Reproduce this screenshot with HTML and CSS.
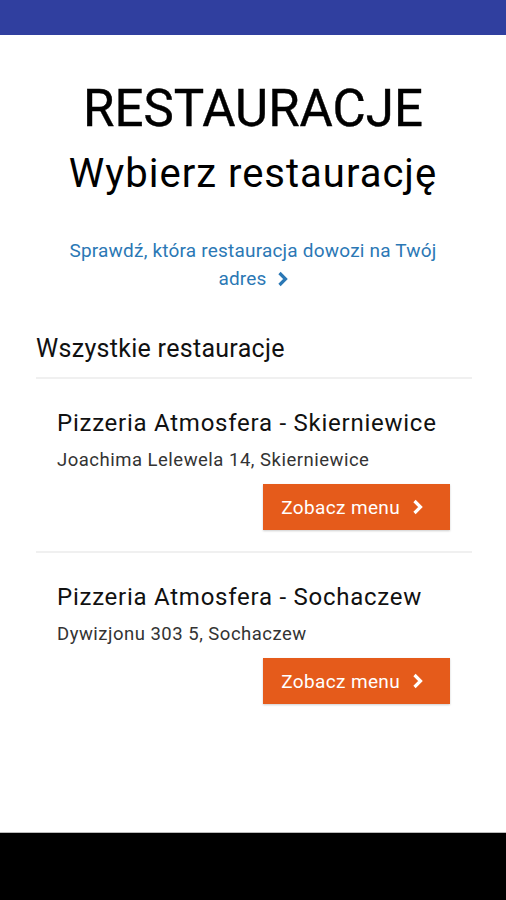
FILE: index.html
```html
<!DOCTYPE html>
<html lang="pl">
  <head>
    <meta charset="UTF-8" />
    <meta name="viewport" content="width=device-width, initial-scale=1.0" />
    <title>Restauracje</title>
    <link rel="stylesheet" href="styles.css">
  </head>
  <body>
    <div class="screen">
      <div class="status-bar"></div>

      <main class="content">
        <div class="intro">
          <h1 class="title">RESTAURACJE</h1>
          <h2 class="subtitle">Wybierz restaurację</h2>
          <a class="check-link" href="#">Sprawdź, która restauracja dowozi na Twój adres<svg class="chevron" viewBox="0 0 11 16" width="11" height="16"><path d="M2.5 2 L8.5 8 L2.5 14" fill="none" stroke="currentColor" stroke-width="3.2"/></svg></a>
        </div>

        <section class="list">
          <h3 class="list-heading">Wszystkie restauracje</h3>

          <div class="restaurant">
            <p class="restaurant-name">Pizzeria Atmosfera - Skierniewice</p>
            <p class="restaurant-address">Joachima Lelewela 14, Skierniewice</p>
            <div class="actions">
              <a class="menu-btn" href="#">Zobacz menu<svg class="chevron" viewBox="0 0 11 16" width="11" height="16"><path d="M2.5 2 L8.5 8 L2.5 14" fill="none" stroke="currentColor" stroke-width="3.2"/></svg></a>
            </div>
          </div>

          <div class="restaurant">
            <p class="restaurant-name">Pizzeria Atmosfera - Sochaczew</p>
            <p class="restaurant-address">Dywizjonu 303 5, Sochaczew</p>
            <div class="actions">
              <a class="menu-btn" href="#">Zobacz menu<svg class="chevron" viewBox="0 0 11 16" width="11" height="16"><path d="M2.5 2 L8.5 8 L2.5 14" fill="none" stroke="currentColor" stroke-width="3.2"/></svg></a>
            </div>
          </div>
        </section>
      </main>

      <div class="nav-bar"></div>
    </div>
  </body>
</html>
```

FILE: styles.css
```css
/* ---- RESET ---- */
* {
  padding: 0;
  margin: 0;
  box-sizing: border-box;
  font-family: Roboto, "Liberation Sans", sans-serif;
}

body {
  background: #ffffff;
  color: #000;
}

.screen {
  display: flex;
  flex-direction: column;
  height: 100vh;
}

.status-bar {
  height: 35px;
  background: #303f9f;
  flex-shrink: 0;
}

.content {
  flex: 1;
}

/* ---- INTRO ---- */
.intro {
  display: flex;
  flex-direction: column;
  align-items: center;
  text-align: center;
  padding-top: 44px;
}

.title {
  font-size: 51px;
  line-height: 60px;
  font-weight: 400;
  color: #000;
  -webkit-text-stroke: 0.4px #000;
}

.subtitle {
  font-size: 40px;
  line-height: 46px;
  font-weight: 400;
  letter-spacing: 1px;
  color: #000;
  margin-top: 12px;
}

.check-link {
  display: block;
  margin-top: 40px;
  max-width: 400px;
  font-size: 19px;
  line-height: 28px;
  letter-spacing: 0.2px;
  color: #2b78b5;
  text-decoration: none;
}

.check-link .chevron {
  margin-left: 10px;
  vertical-align: -2px;
}

/* ---- LIST ---- */
.list {
  padding: 0 34px 0 36px;
  margin-top: 41px;
}

.list-heading {
  font-size: 25px;
  line-height: 30px;
  font-weight: 400;
  letter-spacing: 0.3px;
  color: #111;
  padding-bottom: 13px;
  border-bottom: 2px solid #f0f0f0;
}

.restaurant {
  padding: 29px 22px 21px 21px;
  border-bottom: 2px solid #f0f0f0;
}

.restaurant:last-child {
  border-bottom: none;
}

.restaurant-name {
  font-size: 24px;
  line-height: 30px;
  letter-spacing: 0.75px;
  color: #111;
}

.restaurant-address {
  font-size: 18.5px;
  line-height: 24px;
  letter-spacing: 0.5px;
  color: #333;
  margin-top: 10px;
}

.actions {
  display: flex;
  justify-content: flex-end;
  margin-top: 12px;
}

.menu-btn {
  display: flex;
  align-items: center;
  gap: 12px;
  height: 46px;
  padding: 0 27px 0 18px;
  background: #e55b1b;
  color: #fff;
  font-size: 19px;
  letter-spacing: 0.35px;
  text-decoration: none;
  box-shadow: 0 1px 2px rgba(0, 0, 0, 0.2);
}

/* ---- NAV BAR ---- */
.nav-bar {
  height: 68px;
  background: #000;
  border-top: 1px solid #bbb;
  flex-shrink: 0;
}
```
